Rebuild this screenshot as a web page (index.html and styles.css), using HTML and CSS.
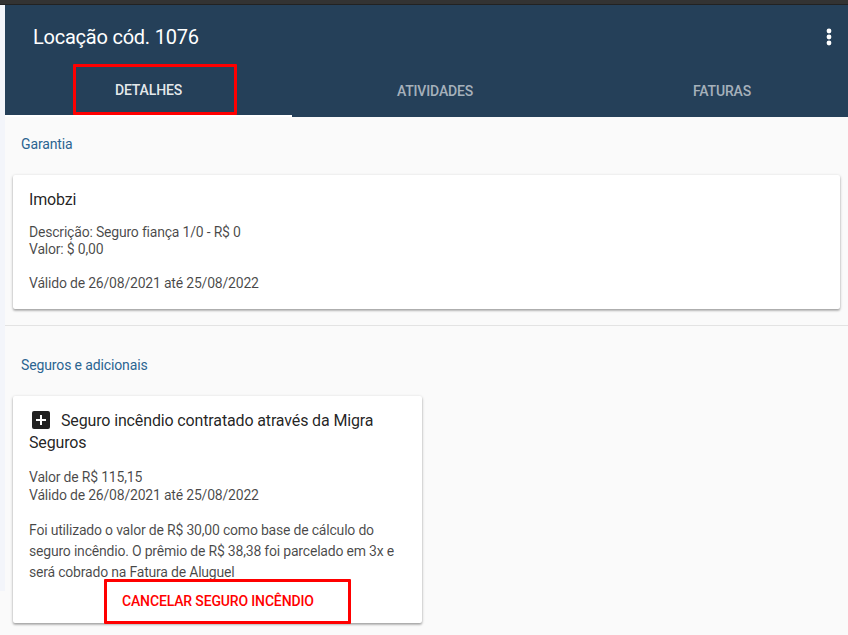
FILE: index.html
```html
<!DOCTYPE html>
<html lang="pt-BR">
<head>
<meta charset="utf-8">
<title>Locação cód. 1076</title>
<link rel="stylesheet" href="styles.css">
</head>
<body>
<div class="topbar"></div>
<div class="shell">
  <aside class="rail"></aside>
  <main class="page">
    <header class="header">
      <div class="titlebar">
        <h1 class="title">Locação cód. 1076</h1>
        <svg class="more" viewBox="0 0 6 18" width="6" height="18" aria-hidden="true"><circle cx="3" cy="3" r="2.4"/><circle cx="3" cy="9" r="2.4"/><circle cx="3" cy="15" r="2.4"/></svg>
      </div>
      <nav class="tabs">
        <div class="tab tab-active">DETALHES</div>
        <div class="tab">ATIVIDADES</div>
        <div class="tab">FATURAS</div>
      </nav>
    </header>
    <section class="section section-first">
      <h2 class="subheader">Garantia</h2>
      <article class="card card-wide">
        <h3 class="card-title">Imobzi</h3>
        <p class="text text-gap">Descrição: Seguro fiança 1/0 - R$ 0<br>Valor: $ 0,00</p>
        <p class="text text-valid">Válido de 26/08/2021 até 25/08/2022</p>
      </article>
    </section>
    <hr class="divider">
    <section class="section">
      <h2 class="subheader subheader-second">Seguros e adicionais</h2>
      <article class="card card-narrow">
        <h3 class="card-title card-title-icon"><svg class="plus" viewBox="0 0 18 18" width="18" height="18" aria-hidden="true"><rect width="18" height="18" rx="2" fill="#212121"/><path d="M9 4v10M4 9h10" stroke="#fff" stroke-width="2"/></svg>Seguro incêndio contratado através da Migra Seguros</h3>
        <p class="text text-gap2">Valor de R$ 115,15<br>Válido de 26/08/2021 até 25/08/2022</p>
        <p class="text text-long">Foi utilizado o valor de R$ 30,00 como base de cálculo do seguro incêndio. O prêmio de R$ 38,38 foi parcelado em 3x e será cobrado na Fatura de Aluguel</p>
        <div class="actions"><span class="cancel">CANCELAR SEGURO INCÊNDIO</span></div>
      </article>
    </section>
  </main>
</div>
<div class="mark mark-tab"></div>
<div class="mark mark-cancel"></div>
</body>
</html>
```

FILE: styles.css
```css
* { box-sizing: border-box; }
html, body { margin: 0; height: 100%; overflow: hidden; }
body { position: relative; background: #fafafa; font-family: Roboto, "Liberation Sans", sans-serif; color: rgba(0,0,0,.87); }
.topbar { height: 5px; background: #333; border-bottom: 1px solid #222; }
.shell { display: flex; height: 630px; }
.rail { width: 5px; flex: none; height: 586px; background: #f3f5fa; }
.page { flex: 1; min-width: 0; background: #fafafa; }
.header { height: 112px; background: #254059; overflow: hidden; }
.titlebar { height: 60px; display: flex; align-items: center; justify-content: space-between; padding: 3px 16px 0 28px; }
.title { margin: 0; font-size: 20px; font-weight: 400; letter-spacing: -.23px; color: #fff; line-height: 58px; }
.more { fill: #fff; }
.tabs { display: grid; grid-template-columns: repeat(3, 287px); height: 52px; }
.tab { display: flex; align-items: center; justify-content: center; font-size: 14px; font-weight: 500; letter-spacing: -.15px; color: rgba(255,255,255,.6); padding: 0 1px 1px 0; }
.tab-active { color: rgba(255,255,255,.9); border-bottom: 2px solid #fff; padding-right: 0; }
.section { padding: 0 8px; }
.section-first { padding-bottom: 16px; }
.subheader { margin: 0; height: 58px; padding: 0 8px; font-size: 14px; font-weight: 400; letter-spacing: -.13px; line-height: 55px; color: #2b6491; }
.subheader-second { height: 70px; padding-top: 12px; }
.card { background: #fff; border-radius: 2px; box-shadow: 0 1px 3px rgba(0,0,0,.3), 0 2px 2px rgba(0,0,0,.14); padding: 16px; }
.card-wide { width: 827px; height: 134px; }
.card-narrow { width: 409px; height: 227px; position: relative; }
.card-title { margin: 0; font-size: 16px; font-weight: 400; letter-spacing: -.14px; line-height: 16px; padding-top: 1px; color: rgba(0,0,0,.87); }
.card-title-icon { line-height: 22px; padding-top: 0; margin-top: -2px; }
.plus { display: inline-block; vertical-align: -3px; margin: 0 11px 0 3px; }
.text { margin: 0; font-size: 14px; letter-spacing: -.2px; line-height: 16.5px; color: rgba(0,0,0,.72); }
.text-gap { margin-top: 16px; }
.text-valid { margin-top: 18px; }
.text-gap2 { margin-top: 14px; line-height: 18px; }
.text-long { margin-top: 16px; line-height: 21px; width: 372px; }
.actions { position: absolute; left: 109px; bottom: 14px; }
.cancel { font-size: 14px; font-weight: 500; letter-spacing: -.15px; color: #f00; line-height: 16px; display: block; }
.divider { margin: 0; border: 0; border-top: 1px solid #e3e3e3; }
.mark { position: absolute; border: 3px solid #f00; border-radius: 1px; }
.mark-tab { left: 73px; top: 64px; width: 164px; height: 51px; }
.mark-cancel { left: 104px; top: 579px; width: 247px; height: 45px; }
```
